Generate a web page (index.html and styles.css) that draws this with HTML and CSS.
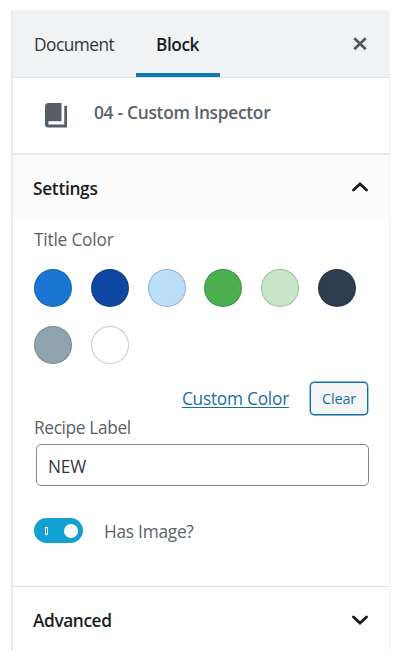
FILE: index.html
```html
<!DOCTYPE html>
<html lang="en">
<head>
<meta charset="utf-8">
<title>Block settings</title>
<link rel="stylesheet" href="styles.css">
</head>
<body>
<aside class="panel">
  <header class="tabs">
    <button class="tab tab-document"><span>Document</span></button>
    <button class="tab tab-block active"><span>Block</span></button>
    <button class="close" aria-label="Close"><svg width="14" height="14" viewBox="0 0 14 14"><path d="M1.3 1.3 12.7 12.3M12.7 1.3 1.3 12.3" stroke="#50575e" stroke-width="2.7" fill="none"/></svg></button>
  </header>
  <section class="card">
    <svg class="book" width="22" height="25" viewBox="0 0 22 25"><path fill="#555d66" d="M3.5 0H16.5V18.3H3.4V21.6H19.3V2.8H22V24.6H3.2Q0 24.4 0 21.2V3.4Q0 .2 3.5 0Z"/></svg>
    <span class="card-title">04 - Custom Inspector</span>
  </section>
  <button class="section-head settings"><span class="settings-text">Settings</span>
    <svg class="chevron-up" width="16" height="10" viewBox="0 0 16 10"><path d="M1.5 8.1 8 2 14.5 8.1" stroke="#191e23" stroke-width="2.8" fill="none" stroke-linecap="round"/></svg>
  </button>
  <div class="body">
    <div class="label label-title"><span>Title Color</span></div>
    <div class="swatches">
      <i class="swatch blue"></i><i class="swatch navy"></i><i class="swatch sky"></i><i class="swatch green"></i><i class="swatch mint"></i><i class="swatch slate"></i><i class="swatch gray"></i><i class="swatch white"></i>
    </div>
    <div class="actions"><a class="custom">Custom Color</a><button class="clear"><span>Clear</span></button></div>
    <div class="label label-recipe"><span>Recipe Label</span></div>
    <div class="field"><span>NEW</span></div>
    <div class="toggle-row"><span class="toggle"><i class="mark"></i><i class="knob"></i></span><span class="toggle-text">Has Image?</span></div>
  </div>
  <button class="section-head advanced"><span class="advanced-text">Advanced</span>
    <svg class="chevron-down" width="16" height="10" viewBox="0 0 16 10"><path d="M1.5 1.9 8 8 14.5 1.9" stroke="#191e23" stroke-width="2.8" fill="none" stroke-linecap="round"/></svg>
  </button>
</aside>
</body>
</html>
```
FILE: styles.css
```css
* { box-sizing: border-box; }
body { margin: 0; background: #fff; font: 17.3px/24px "Open Sans", "Noto Sans", sans-serif; color: #5b626a; }
button { font: inherit; color: inherit; background: none; border: 0; padding: 0; margin: 0; }
svg { display: block; flex: none; }
span, a { white-space: nowrap; }
.panel { width: 379px; height: 641px; margin: 10px 0 0 11px; border-left: 2px solid #eaebec; border-right: 1px solid #f2f2f3; }
.tabs { display: flex; height: 68px; background: #f1f2f4; border-bottom: 1px solid #e0e2e4; margin-right: -1px; }
.tab { height: 67px; text-align: left; }
.tab-document { width: 123px; padding-left: 21px; padding-top: 2px; color: #32373c; letter-spacing: -.5px; }
.tab-block { width: 84px; padding-left: 20px; padding-top: 6px; border-bottom: 4px solid #0e7ab5; color: #191e23; font-weight: 600; letter-spacing: -.45px; }
.close { margin-left: auto; margin-right: 23px; }
.card { display: flex; height: 77px; padding: 23px 0 0 32px; border-bottom: 2px solid #e8e9eb; }
.book { margin-top: 2px; }
.card-title { margin-left: 27px; font-weight: 600; letter-spacing: -.26px; }
.section-head { display: flex; align-items: center; justify-content: space-between; width: 100%; padding: 0 21px 0 20px; color: #191e23; font-weight: 600; text-align: left; }
.settings { height: 63px; background: #fbfbfb; padding-top: 5px; }
.settings-text { letter-spacing: -.3px; }
.chevron-up { margin-top: -5px; }
.body { height: 368px; padding: 10px 20px 0 21px; }
.label { height: 24px; letter-spacing: -.2px; }
.swatches { display: grid; grid-template-columns: repeat(6, 38px); column-gap: 18.75px; row-gap: 18.5px; margin-top: 17px; }
.swatch { width: 38px; height: 38px; border-radius: 50%; border: 1.3px solid rgba(25,30,35,.24); }
.blue { background: #1976d2; }
.navy { background: #0d47a1; }
.sky { background: #bbdefb; }
.green { background: #4caf50; }
.mint { background: #c8e6c9; }
.slate { background: #2c3e50; }
.gray { background: #90a4ae; }
.white { background: #fff; }
.actions { display: flex; justify-content: flex-end; margin-top: 18.5px; height: 33px; padding-right: 1px; }
.custom { line-height: 33px; color: #1b6f9f; text-decoration: underline; text-decoration-thickness: 1px; text-underline-offset: 2px; margin-right: 21px; letter-spacing: -.23px; }
.clear { width: 58px; height: 33px; border: 1.4px solid #0e71a5; border-radius: 4px; background: #f3f5f6; color: #1b6f9f; font-size: 14.5px; letter-spacing: -.15px; box-shadow: 0 0 0 .4px #0e71a5; }
.label-recipe { margin-top: 1px; letter-spacing: -.35px; }
.field { height: 42px; margin: 4px 0 0 2px; border: 1px solid #7e8993; border-radius: 5px; padding: 10px 12px 0 11px; color: #32373c; letter-spacing: -.2px; }
.toggle-row { display: flex; align-items: center; margin-top: 32px; height: 25px; }
.toggle { display: flex; align-items: center; justify-content: space-between; width: 49px; height: 25px; padding: 0 5px 0 11px; border-radius: 13px; background: #11a0d2; }
.mark { width: 3px; height: 8px; border: 1px solid #fff; }
.knob { width: 14px; height: 14px; border-radius: 50%; background: #fff; }
.toggle-text { margin: 2px 0 0 21px; letter-spacing: -.25px; }
.advanced { height: 65px; border-top: 1px solid #dfe1e3; padding-top: 4px; }
.advanced-text { letter-spacing: -.4px; }
.chevron-down { margin-top: -3px; }
```
